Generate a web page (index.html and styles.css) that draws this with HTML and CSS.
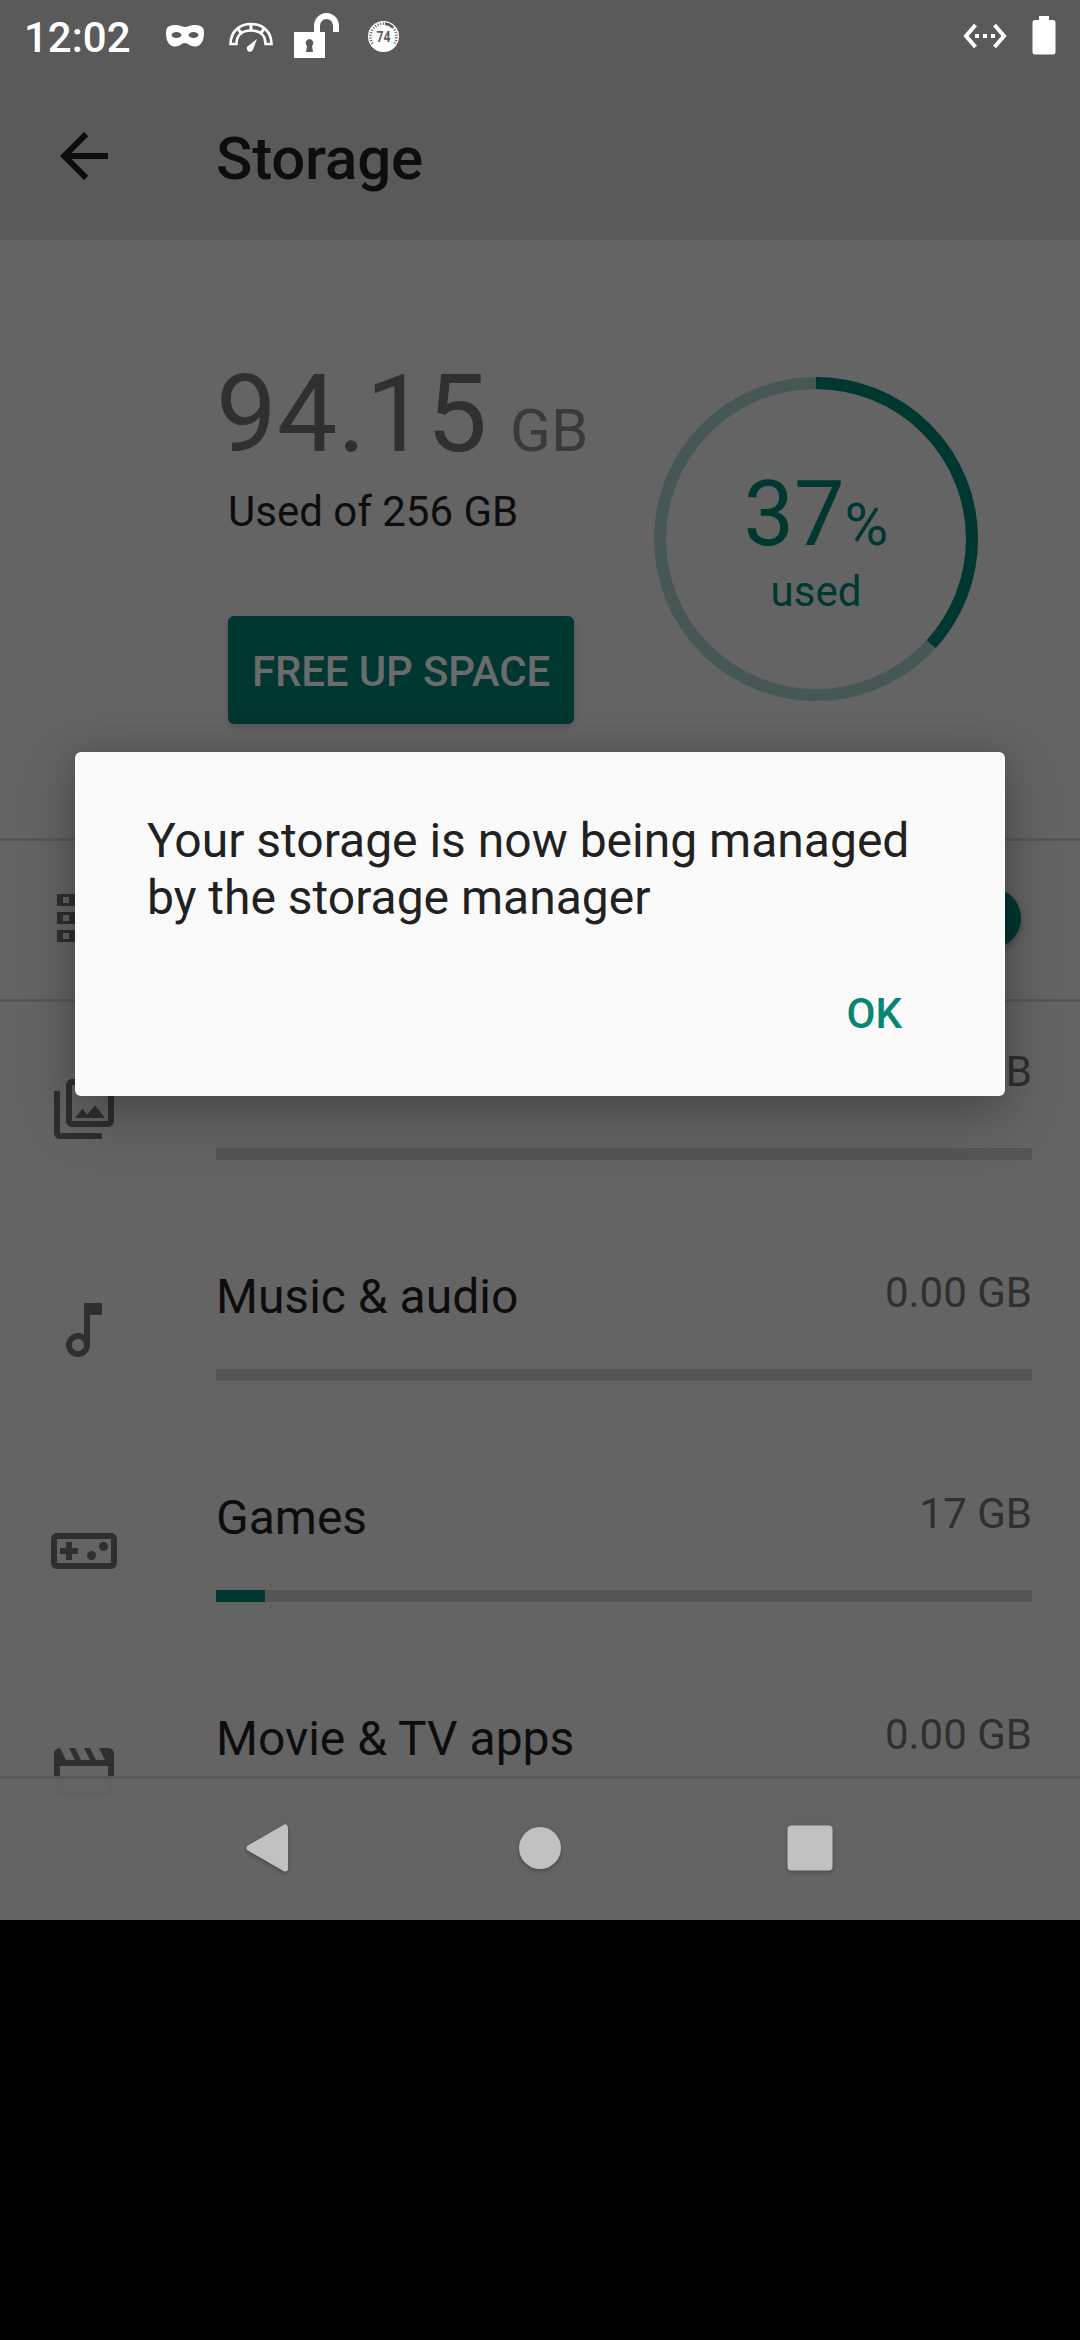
FILE: index.html
```html
<!DOCTYPE html>
<html lang="en">
<head>
<meta charset="utf-8">
<title>Storage</title>
<link rel="stylesheet" href="styles.css">
</head>
<body>
<div class="screen">
  <header class="status-bar">
    <span class="clock">12:02</span>
    <svg class="icon-mask" width="40" height="24" viewBox="0 0 40 24"><path fill="#fff" d="M1.500 5C3 .5 12 0 16 2q4 2 8 0c4-2 13-1.500 14.500 3C40 12 38 22.500 30 22.500c-5 0-7-3.500-10-3.500s-5 3.500-10 3.500C2 22.500 0 12 1.500 5z"/><g fill="#5a5a5a"><ellipse cx="11.500" cy="11" rx="5" ry="3"/><ellipse cx="28.500" cy="11" rx="5" ry="3"/></g></svg>
    <svg class="icon-gauge" width="44" height="30" viewBox="0 0 44 30"><g fill="none" stroke="#fff" stroke-width="2.600"><path d="M1.500 22C1.500 10 10 2 22 2s20.500 8 20.500 20h-6c0-9-5.500-13.500-14.500-13.500S7.500 13 7.500 22z"/><path d="M22 2v6M9 7l4 5M35 7l-4 5" stroke-width="3"/></g><path fill="#fff" d="M28 17l-4 10.500a3.200 3.200 0 1 1-5-3.500z"/></svg>
    <svg class="icon-lock" width="46" height="46" viewBox="0 0 46 46"><path fill="#fff" fill-rule="evenodd" d="M0 19h20v-6A12.500 13 0 0 1 45 13v6h-6v-6a6.500 7 0 0 0-13 0v6h5v26H0zM15.500 26a4 4 0 0 0-2.500 7l-1 6h7l-1-6a4 4 0 0 0-2.500-7z"/></svg>
    <svg class="icon-badge" width="31" height="31" viewBox="0 0 31 31">
      <circle cx="15.500" cy="15.500" r="15.500" fill="#fff"/>
      <path fill="none" stroke="#5a5a5a" stroke-width="2.500" stroke-dasharray="1 1.700" d="M4.500 22.500A13 13 0 1 1 26.500 22.500"/>
      <path fill="none" stroke="#5a5a5a" stroke-width="2.800" d="M17 2.700q4.500.5 7.800 3.600"/>
      <text class="badge-text" x="15.500" y="20.800" text-anchor="middle" textLength="14" lengthAdjust="spacingAndGlyphs">74</text>
    </svg>
    <svg class="icon-ethernet" width="44" height="26" viewBox="0 0 44 26"><path fill="none" stroke="#fff" stroke-width="4" d="M12.500 2L3 13l9.500 11M31.500 2L41 13l-9.500 11"/><path fill="#fff" d="M12 11h4v4h-4zM20 11h4v4h-4zM28 11h4v4h-4z"/></svg>
    <svg class="icon-battery" width="24" height="39" viewBox="0 0 24 39"><path fill="#fff" d="M7 0h10v4h4q2.500 0 2.500 2.500v29.500q0 2.500-2.500 2.500H3Q.5 38.500.5 36V6.500Q.5 4 3 4h4z"/></svg>
  </header>

  <div class="app-bar">
    <svg class="icon back" viewBox="0 0 24 24"><path d="M20 11H7.830l5.590-5.590L12 4l-8 8 8 8 1.410-1.410L7.830 13H20v-2z"/></svg>
    <h1 class="title">Storage</h1>
  </div>

  <section class="summary">
    <div class="usage">
      <div class="amount">94.15 <span class="unit">GB</span></div>
      <div class="total">Used of 256 GB</div>
      <button class="free-up">FREE UP SPACE</button>
    </div>
    <div class="ring">
      <svg class="ring-art" viewBox="0 0 324 324">
        <circle class="ring-track" cx="162" cy="162" r="156"/>
        <circle class="ring-value" cx="162" cy="162" r="156" pathLength="100" transform="rotate(-90 162 162)"/>
      </svg>
      <div class="ring-label">
        <div class="percent">37<span class="percent-sign">%</span></div>
        <div class="used">used</div>
      </div>
    </div>
  </section>

  <section class="manager">
    <svg class="icon" viewBox="0 0 24 24"><path d="M2 20h20v-4H2v4zm2-3h2v2H4v-2zM2 4v4h20V4H2zm4 3H4V5h2v2zm-4 7h20v-4H2v4zm2-3h2v2H4v-2z"/></svg>
    <span class="switch"></span>
  </section>

  <main class="categories">
    <div class="row">
      <svg class="icon" viewBox="0 0 24 24"><path d="M20 4v12H8V4h12m0-2H8c-1.100 0-2 .9-2 2v12c0 1.100.9 2 2 2h12c1.100 0 2-.9 2-2V4c0-1.100-.9-2-2-2z"/><path d="M9 15l2.500-3.200 1.500 2.100 2.700-3.100L19 15zM2 6v14c0 1.100.9 2 2 2h14v-2H4V6H2z"/></svg>
      <div class="info">
        <div class="line"><span class="name">Photos &amp; videos</span><span class="size">0.00 GB</span></div>
        <div class="bar"></div>
      </div>
    </div>
    <div class="row">
      <svg class="icon" viewBox="0 0 24 24"><path d="M12 3l.01 10.550c-.59-.34-1.270-.55-2-.55C7.790 13 6 14.790 6 17s1.790 4 4.010 4S14 19.210 14 17V7h4V3h-6zm-1.990 16c-1.100 0-2-.9-2-2s.9-2 2-2 2 .9 2 2-.9 2-2 2z"/></svg>
      <div class="info">
        <div class="line"><span class="name">Music &amp; audio</span><span class="size">0.00 GB</span></div>
        <div class="bar"></div>
      </div>
    </div>
    <div class="row">
      <svg class="icon" viewBox="0 0 24 24"><path d="M21 6H3c-1.100 0-2 .9-2 2v8c0 1.100.9 2 2 2h18c1.100 0 2-.9 2-2V8c0-1.100-.9-2-2-2zm0 10H3V8h18v8zM6 15h2v-2h2v-2H8V9H6v2H4v2h2z"/><circle cx="14.500" cy="13.500" r="1.500"/><circle cx="18.500" cy="10.500" r="1.500"/></svg>
      <div class="info">
        <div class="line"><span class="name">Games</span><span class="size">17 GB</span></div>
        <div class="bar"><div class="fill" style="width: 6%"></div></div>
      </div>
    </div>
    <div class="row">
      <svg class="icon" viewBox="0 0 24 24"><path fill-rule="evenodd" d="M4 4h16c1.100 0 2 .9 2 2v12c0 1.100-.9 2-2 2H4c-1.100 0-2-.9-2-2V6c0-1.100.9-2 2-2zm0 0l2 4h3L7 4zM9 4l2 4h3l-2-4zM14 4l2 4h3l-2-4zM4 10v8h16v-8z"/></svg>
      <div class="info">
        <div class="line"><span class="name">Movie &amp; TV apps</span><span class="size">0.00 GB</span></div>
        <div class="bar"></div>
      </div>
    </div>
  </main>

  <nav class="nav-bar">
    <svg class="nav-icon" viewBox="0 0 60 60"><path fill="#c1c1c1" stroke="#c1c1c1" stroke-width="6" stroke-linejoin="round" d="M45 9.500v41L9.500 30z"/></svg>
    <svg class="nav-icon" viewBox="0 0 60 60"><circle cx="30" cy="30" r="21" fill="#c1c1c1"/></svg>
    <svg class="nav-icon" viewBox="0 0 60 60"><rect x="7.500" y="7.500" width="45" height="45" rx="4" fill="#c1c1c1"/></svg>
  </nav>

  <div class="dialog" role="dialog">
    <p class="message">Your storage is now being managed by the storage manager</p>
    <button class="ok">OK</button>
  </div>
</div>
</body>
</html>
```
FILE: styles.css
```css
* {
  box-sizing: border-box;
}

body {
  margin: 0;
  background: #000;
  font-family: Roboto, "Noto Sans", sans-serif;
}

.screen {
  position: relative;
  width: 1080px;
  height: 1920px;
  overflow: hidden;
  background: #646464;
  color: #0d0d0d;
}

.status-bar {
  display: flex;
  align-items: flex-start;
  height: 72px;
  padding-left: 24px;
  background: #5a5a5a;
}

.clock {
  width: 141px;
  margin-top: 13px;
  font-size: 42px;
  font-weight: 500;
  line-height: 49px;
  color: #fff;
}

.icon-mask {
  margin-top: 24px;
}

.icon-gauge {
  margin: 22px 0 0 24px;
}

.icon-lock {
  margin: 13px 0 0 21px;
}

.icon-badge {
  margin: 21px 0 0 28px;
}

.badge-text {
  fill: #5a5a5a;
  font-size: 14.5px;
  font-weight: 700;
}

.icon-ethernet {
  margin: 23px 0 0 564px;
}

.icon-battery {
  margin: 16px 0 0 25px;
}

.app-bar {
  display: flex;
  align-items: center;
  height: 168px;
  padding-left: 48px;
  background: #5a5a5a;
}

.icon {
  flex: none;
  width: 72px;
  height: 72px;
  fill: #2f2f2f;
}

.back {
  fill: #0d0d0d;
}

.title {
  margin: 5px 0 0 96px;
  font-size: 60px;
  font-weight: 500;
  line-height: 70px;
  letter-spacing: -.2px;
}

.summary {
  display: flex;
  justify-content: space-between;
  height: 598px;
  padding: 111px 102px 0 216px;
}

.amount {
  font-size: 108px;
  line-height: 126px;
  color: #303030;
}

.unit {
  margin-left: -4px;
  font-size: 60px;
  line-height: 60px;
  color: #3a3a3a;
}

.total {
  margin: 10px 0 79px 12px;
  font-size: 42px;
  line-height: 50px;
}

button {
  border: 0;
  font-family: inherit;
  font-size: 42px;
  font-weight: 500;
}

.free-up {
  display: block;
  width: 346px;
  height: 108px;
  margin-left: 12px;
  padding: 3px 0 0;
  border-radius: 6px;
  background: #003730;
  box-shadow: 0 3px 6px rgba(0, 0, 0, .15);
  color: #6b6b6b;
  letter-spacing: -.15px;
  white-space: nowrap;
}

.ring {
  display: grid;
  place-items: center;
  width: 324px;
  height: 324px;
  margin-top: 26px;
}

.ring-art,
.ring-label {
  grid-area: 1 / 1;
}

.ring-track,
.ring-value {
  fill: none;
  stroke-width: 12;
  stroke: #475755;
}

.ring-value {
  stroke: #003730;
  stroke-dasharray: 36.780 100;
}

.ring-label {
  color: #003730;
  text-align: center;
}

.percent {
  font-size: 90px;
  line-height: 105px;
}

.percent-sign {
  font-size: 60px;
  line-height: 60px;
}

.used {
  font-size: 42px;
  line-height: 49px;
}

.manager {
  display: flex;
  align-items: center;
  justify-content: space-between;
  height: 161px;
  padding: 0 59px 4px 51px;
  border-top: 3px solid #585858;
}

.switch {
  width: 60px;
  height: 60px;
  border-radius: 50%;
  background: #003730;
  box-shadow: 0 3px 6px rgba(0, 0, 0, .3);
}

.categories {
  box-shadow: inset 0 3px #585858;
}

.row {
  display: flex;
  align-items: flex-start;
  height: 221px;
  padding: 0 48px;
}

.row .icon {
  margin-top: 74px;
}

.info {
  flex: 1;
  height: 221px;
  margin-left: 96px;
  padding-top: 48px;
}

.line {
  display: flex;
  justify-content: space-between;
  height: 101px;
}

.name {
  font-size: 48px;
  line-height: 57px;
}

.size {
  font-size: 42px;
  line-height: 49px;
  color: #2f2f2f;
}

.bar {
  height: 12px;
  background: #555;
}

.fill {
  height: 12px;
  background: #003730;
}

.nav-bar {
  position: absolute;
  right: 0;
  bottom: 0;
  left: 0;
  display: flex;
  align-items: center;
  justify-content: center;
  gap: 210px;
  height: 144px;
  background: rgba(100, 100, 100, .96);
  box-shadow: inset 0 3px #585858;
}

.nav-icon {
  width: 60px;
  height: 60px;
  filter: drop-shadow(0 2px 2px rgba(0, 0, 0, .25));
}

.dialog {
  position: absolute;
  top: 752px;
  left: 75px;
  width: 930px;
  height: 344px;
  padding: 60px 72px 0;
  border-radius: 6px;
  background: #fafafa;
  box-shadow: 0 20px 60px rgba(0, 0, 0, .25), 0 0 30px rgba(0, 0, 0, .12);
}

.message {
  margin: 0 0 63px;
  font-size: 48px;
  line-height: 57px;
  color: #212121;
}

.ok {
  display: block;
  margin: 0 31px 0 auto;
  padding: 0;
  background: none;
  color: #088673;
  line-height: 50px;
}
```
